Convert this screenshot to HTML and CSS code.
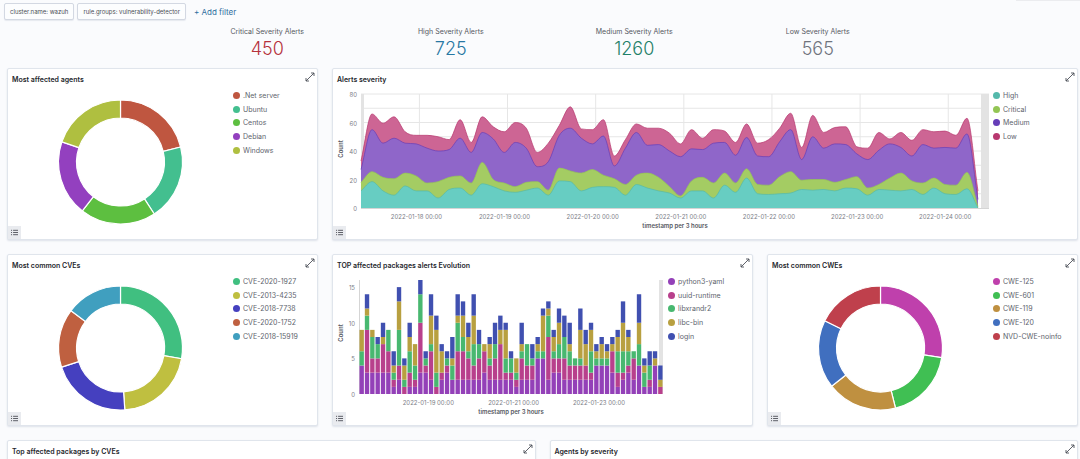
FILE: index.html
```html
<!DOCTYPE html>
<html lang="en">
<head>
  <meta charset="UTF-8" />
  <meta name="viewport" content="width=device-width, initial-scale=1.0"/>
  <title>Vulnerabilities</title>
  <link rel="stylesheet" href="styles.css">
</head>
<body>
  <svg class="sprite" aria-hidden="true">
    <symbol id="icon-expand" viewBox="0 0 10 10">
      <path d="M1.2 8.8L8.8 1.2M6 1h3v3M1 6v3h3" fill="none" stroke="currentColor" stroke-width="0.8"/>
    </symbol>
    <symbol id="icon-list" viewBox="0 0 8 8">
      <path d="M0 1.5h1.2M0 4h1.2M0 6.5h1.2M2.4 1.5h5.6M2.4 4h5.6M2.4 6.5h5.6" fill="none" stroke="currentColor" stroke-width="1"/>
    </symbol>
  </svg>

  <div class="filter-bar">
    <button class="filter-pill">cluster.name: wazuh</button>
    <button class="filter-pill">rule.groups: vulnerability-detector</button>
    <button class="add-filter">+ Add filter</button>
  </div>

  <main class="dashboard">
    <div class="metrics">
      <div class="metric">
        <div class="metric-label">Critical Severity Alerts</div>
        <div class="metric-value critical">450</div>
      </div>
      <div class="metric">
        <div class="metric-label">High Severity Alerts</div>
        <div class="metric-value high">725</div>
      </div>
      <div class="metric">
        <div class="metric-label">Medium Severity Alerts</div>
        <div class="metric-value medium">1260</div>
      </div>
      <div class="metric">
        <div class="metric-label">Low Severity Alerts</div>
        <div class="metric-value low">565</div>
      </div>
    </div>

    <div class="row row-top">
      <section class="panel">
        <header class="panel-header">
          <h2>Most affected agents</h2>
          <button class="icon-btn" aria-label="Expand"><svg><use href="#icon-expand"/></svg></button>
        </header>
        <div class="panel-body">
          <div class="chart" id="agents"></div>
          <ul class="legend"></ul>
        </div>
        <button class="legend-btn" aria-label="Toggle legend"><svg><use href="#icon-list"/></svg></button>
      </section>
      <section class="panel">
        <header class="panel-header">
          <h2>Alerts severity</h2>
          <button class="icon-btn" aria-label="Expand"><svg><use href="#icon-expand"/></svg></button>
        </header>
        <div class="panel-body">
          <div class="chart" id="severity"></div>
          <ul class="legend"></ul>
        </div>
        <button class="legend-btn" aria-label="Toggle legend"><svg><use href="#icon-list"/></svg></button>
      </section>
    </div>

    <div class="row row-middle">
      <section class="panel">
        <header class="panel-header">
          <h2>Most common CVEs</h2>
          <button class="icon-btn" aria-label="Expand"><svg><use href="#icon-expand"/></svg></button>
        </header>
        <div class="panel-body">
          <div class="chart" id="cves"></div>
          <ul class="legend"></ul>
        </div>
        <button class="legend-btn" aria-label="Toggle legend"><svg><use href="#icon-list"/></svg></button>
      </section>
      <section class="panel">
        <header class="panel-header">
          <h2>TOP affected packages alerts Evolution</h2>
          <button class="icon-btn" aria-label="Expand"><svg><use href="#icon-expand"/></svg></button>
        </header>
        <div class="panel-body">
          <div class="chart" id="packages"></div>
          <ul class="legend"></ul>
        </div>
        <button class="legend-btn" aria-label="Toggle legend"><svg><use href="#icon-list"/></svg></button>
      </section>
      <section class="panel">
        <header class="panel-header">
          <h2>Most common CWEs</h2>
          <button class="icon-btn" aria-label="Expand"><svg><use href="#icon-expand"/></svg></button>
        </header>
        <div class="panel-body">
          <div class="chart" id="cwes"></div>
          <ul class="legend"></ul>
        </div>
        <button class="legend-btn" aria-label="Toggle legend"><svg><use href="#icon-list"/></svg></button>
      </section>
    </div>

    <div class="row row-bottom">
      <section class="panel">
        <header class="panel-header">
          <h2>Top affected packages by CVEs</h2>
          <button class="icon-btn" aria-label="Expand"><svg><use href="#icon-expand"/></svg></button>
        </header>
      </section>
      <section class="panel">
        <header class="panel-header">
          <h2>Agents by severity</h2>
          <button class="icon-btn" aria-label="Expand"><svg><use href="#icon-expand"/></svg></button>
        </header>
      </section>
    </div>
  </main>

  <script src="charts.js"></script>
</body>
</html>
```

FILE: styles.css
```css
* {
  box-sizing: border-box;
}

body {
  height: 100vh;
  margin: 0;
  overflow: hidden;
  background: #fafbfd;
  color: #343741;
  font-family: Inter, "Open Sans", sans-serif;
  font-size: 7px;
}

button {
  font-family: inherit;
  cursor: pointer;
}

.sprite {
  display: none;
}

.filter-bar {
  position: relative;
  display: flex;
  gap: 3px;
  padding: 3px 4px 0;
}

.filter-bar::after {
  content: "";
  position: absolute;
  top: 0;
  right: 0;
  width: 64px;
  height: 1px;
  background: #ebecef;
}

.filter-pill {
  height: 17px;
  padding: 0 5px;
  background: #fcfdfe;
  border: 1px solid #d3d8e2;
  border-radius: 2px;
  box-shadow: 0 1px 1px #e6e9ef;
  color: #4a4d55;
  font-size: 6px;
}

.add-filter {
  height: 17px;
  padding: 0 5px;
  background: none;
  border: none;
  color: #2f6f9f;
  font-size: 8px;
}

.dashboard {
  padding: 6px 2px 0 7px;
}

.metrics {
  display: grid;
  grid-template-columns: repeat(4, 1fr);
  max-width: 734px;
  height: 42px;
  margin: 0 auto;
  text-align: center;
}

.metric-label {
  line-height: 11px;
  color: #555861;
}

.metric-value {
  line-height: 24px;
  font-size: 18px;
  font-weight: 300;
}

.critical {
  color: #b5323c;
}

.high {
  color: #2777a3;
}

.medium {
  color: #1f8068;
}

.low {
  color: #70747d;
}

.row {
  display: grid;
  gap: 14px;
  margin-bottom: 14px;
}

.row-top {
  grid-template-columns: 311fr 746fr;
}

.row-middle {
  grid-template-columns: 311fr 421fr 311fr;
}

.row-bottom {
  grid-template-columns: 1fr 1fr;
}

.panel {
  position: relative;
  min-height: 172px;
  background: #fff;
  border: 1px solid #e0e5ec;
  border-radius: 2px;
  box-shadow: 0 1px 2px #dde2e9;
}

.panel-header {
  display: flex;
  justify-content: space-between;
  align-items: center;
  height: 20px;
  padding: 0 2px 0 4px;
}

.panel-header h2 {
  margin: 0;
  font-size: 7px;
  font-weight: 600;
  color: #25272d;
}

.icon-btn {
  width: 10px;
  height: 10px;
  margin-bottom: 4px;
  padding: 0;
  background: none;
  border: none;
  color: #343741;
}

.icon-btn svg {
  display: block;
  width: 10px;
  height: 10px;
}

.panel-body {
  display: flex;
}

.chart {
  flex: 1;
  min-width: 0;
  height: 150px;
}

.chart svg {
  display: block;
}

.legend {
  display: grid;
  grid-template-rows: repeat(5, 1fr);
  width: 84px;
  height: 68px;
  margin: 0;
  padding: 0;
  list-style: none;
  color: #60646d;
}

.legend li {
  display: flex;
  align-items: center;
  gap: 3px;
}

.legend .dot {
  width: 7px;
  height: 7px;
  border-radius: 50%;
}

.legend-btn {
  position: absolute;
  left: 0;
  bottom: 0;
  width: 13px;
  height: 13px;
  padding: 0;
  background: #e9ebef;
  border: none;
  color: #4a4d55;
}

.legend-btn svg {
  display: block;
  width: 7px;
  height: 7px;
  margin: 0 auto;
}

.tick {
  font-size: 6px;
  fill: #7b7e86;
}

.axis-title {
  font-size: 6px;
  font-weight: 600;
  fill: #555861;
}

.grid-line {
  stroke: #e6e6e6;
}

.axis-line {
  stroke: #d5d5d5;
}

.partial {
  fill: #e3e3e3;
}
```

FILE: charts.js
```js
const SVG_NS = 'http://www.w3.org/2000/svg';

function el(parent, name, attrs, text) {
  const node = document.createElementNS(SVG_NS, name);
  for (const key in attrs) node.setAttribute(key, attrs[key]);
  if (text !== undefined) node.textContent = text;
  parent.appendChild(node);
  return node;
}

function createSvg(box) {
  box.innerHTML = '';
  return el(box, 'svg', { width: box.clientWidth, height: box.clientHeight });
}

function drawLegend(box, names, colors) {
  box.nextElementSibling.innerHTML = names.map((name, i) =>
    `<li><span class="dot" style="background:${colors[i]}"></span>${name}</li>`
  ).join('');
}

// Donuts
const donuts = {
  agents: {
    names: ['.Net server', 'Ubuntu', 'Centos', 'Debian', 'Windows'],
    values: [76, 71, 71, 71, 71],
    colors: ['#bf5640', '#43bf8f', '#5dbf40', '#9340bf', '#afbf40']
  },
  cves: {
    names: ['CVE-2020-1927', 'CVE-2013-4235', 'CVE-2018-7738', 'CVE-2020-1752', 'CVE-2018-15919'],
    values: [100, 76, 76, 55, 53],
    colors: ['#40bf80', '#bfbf40', '#4540bf', '#bf6040', '#409fbf']
  },
  cwes: {
    names: ['CWE-125', 'CWE-601', 'CWE-119', 'CWE-120', 'NVD-CWE-noinfo'],
    values: [99, 67, 66, 64, 64],
    colors: ['#bf40ac', '#40bf53', '#bf9040', '#406fbf', '#bf404c']
  }
};

function drawDonut(id) {
  const box = document.getElementById(id);
  const { names, values, colors } = donuts[id];
  const svg = createSvg(box);
  const cx = box.clientWidth / 2;
  const cy = 73;
  const outer = 62;
  const inner = 44;
  const total = values.reduce((a, b) => a + b, 0);
  const point = (r, a) => `${cx + r * Math.sin(a)} ${cy - r * Math.cos(a)}`;
  let start = 0;
  values.forEach((value, i) => {
    const end = start + value / total * Math.PI * 2;
    el(svg, 'path', {
      d: `M${point(outer, start)}A${outer} ${outer} 0 0 1 ${point(outer, end)}` +
         `L${point(inner, end)}A${inner} ${inner} 0 0 0 ${point(inner, start)}Z`,
      fill: colors[i],
      stroke: '#fff',
      'stroke-width': 1.2
    });
    start = end;
  });
  drawLegend(box, names, colors);
}

// Alerts severity, upper edge of every stacked layer
const severity = {
  names: ['High', 'Critical', 'Medium', 'Low'],
  colors: ['#54b9ab', '#93c554', '#663db8', '#b8386f'],
  fills: ['#67cdc2', '#a4cc63', '#8f66c9', '#cd6594'],
  tops: [
    [12, 18.5, 12, 9, 15.5, 12, 12, 7, 13, 14, 9, 17, 15, 12, 11, 12.5, 14, 9, 19, 18.5, 12, 14.5, 15, 14.5, 9, 16.5, 14, 12, 10.5, 7, 12, 12, 7, 16, 11, 21, 10, 9.5, 10, 10.5, 13, 12.5, 13, 12, 14, 13.5, 9, 13, 12.5, 12, 13, 9.5, 14, 10, 9.5, 13.5, 0],
    [18, 25.5, 21.5, 20.5, 24.5, 22.5, 17.5, 18.5, 21.5, 22.5, 17.5, 32, 20, 17.5, 15, 18, 18.5, 12.5, 28, 26, 24.5, 27, 23, 20.5, 16.5, 23, 24.5, 21.5, 15, 8.5, 19, 21.5, 17.5, 24.5, 17.5, 27.5, 16.5, 16, 22, 25.5, 19.5, 20, 20, 18, 20, 22, 14, 16.5, 21, 24.5, 19, 17.5, 21, 16.5, 16, 25, 1],
    [27, 55, 45.5, 49, 45.5, 45, 42, 40, 41, 49, 39, 53, 48.5, 39, 46, 42, 29, 32.5, 51, 56, 49, 45, 50.5, 29.5, 42, 53, 44, 44.5, 40, 36, 41.5, 41, 45.5, 46, 37, 49.5, 36.5, 36, 46.5, 55, 34, 50, 42, 45, 44.5, 38, 34, 40.5, 45, 42.5, 36.5, 44.5, 42, 42.5, 42, 52, 6],
    [33, 66, 59.5, 64, 53.5, 51, 51, 50, 48, 62, 46, 64, 57, 53.5, 60, 56, 39, 45.5, 58, 71, 55.5, 55, 62, 36.5, 48, 59, 56, 56, 52.5, 45, 55, 49, 55, 54, 46, 59, 45.5, 48, 56, 66.5, 42.5, 65, 53, 56.5, 57, 43, 42, 53, 48.5, 53, 47.5, 55, 53.5, 54, 51, 63, 12]
  ]
};

// Monotone cubic curve, so that peaks are never overshot
function curve(points) {
  const slopes = points.map((p, i) => {
    if (i === 0 || i === points.length - 1) return 0;
    const a = (p[1] - points[i - 1][1]) / (p[0] - points[i - 1][0]);
    const b = (points[i + 1][1] - p[1]) / (points[i + 1][0] - p[0]);
    if (a * b <= 0) return 0;
    return Math.sign(a) * Math.min(Math.abs(a + b) / 2, 3 * Math.abs(a), 3 * Math.abs(b));
  });
  const last = points.length - 1;
  slopes[0] = (points[1][1] - points[0][1]) / (points[1][0] - points[0][0]);
  slopes[last] = (points[last][1] - points[last - 1][1]) / (points[last][0] - points[last - 1][0]);
  let d = '';
  for (let i = 1; i <= last; i++) {
    const [x0, y0] = points[i - 1];
    const [x1, y1] = points[i];
    const h = (x1 - x0) / 3;
    d += `C${x0 + h} ${y0 + slopes[i - 1] * h} ${x1 - h} ${y1 - slopes[i] * h} ${x1} ${y1}`;
  }
  return d;
}

function drawAxisTitles(svg, left, right, base, middle) {
  el(svg, 'text', { class: 'axis-title', x: (left + right) / 2, y: base + 20, 'text-anchor': 'middle' }, 'timestamp per 3 hours');
  el(svg, 'text', { class: 'axis-title', 'text-anchor': 'middle', transform: `translate(10 ${middle}) rotate(-90)` }, 'Count');
}

function drawSeverity() {
  const box = document.getElementById('severity');
  const svg = createSvg(box);
  const left = 28;
  const right = box.clientWidth - 4;
  const base = 119;
  const step = (right - left) / 57;
  const x = i => left + i * step;
  const y = v => base - v * 114 / 80;

  for (let v = 10; v <= 80; v += 10) {
    el(svg, 'line', { class: 'grid-line', x1: left, x2: right, y1: y(v), y2: y(v) });
  }
  for (let day = 0; day < 7; day++) {
    const gx = x(5.3 + day * 8);
    el(svg, 'line', { class: 'grid-line', x1: gx, x2: gx, y1: y(80), y2: base });
    el(svg, 'text', { class: 'tick', x: gx - 3, y: base + 11, 'text-anchor': 'middle' }, `2022-01-${18 + day} 00:00`);
  }
  for (let v = 0; v <= 80; v += 20) {
    el(svg, 'text', { class: 'tick', x: left - 4, y: y(v) + 3, 'text-anchor': 'end' }, v);
  }
  el(svg, 'rect', { class: 'partial', x: left, y: y(80), width: 3, height: 114 });
  el(svg, 'rect', { class: 'partial', x: right - 8, y: y(80), width: 8, height: 114 });

  for (let n = 3; n >= 0; n--) {
    const points = severity.tops[n].map((v, i) => [x(i), y(v)]);
    el(svg, 'path', {
      d: `M${left} ${base}L${points[0][0]} ${points[0][1]}${curve(points)}L${x(56)} ${base}Z`,
      fill: severity.fills[n]
    });
    el(svg, 'path', {
      d: `M${points[0][0]} ${points[0][1]}${curve(points)}`,
      fill: 'none', stroke: severity.colors[n], 'stroke-width': 0.7
    });
  }
  el(svg, 'line', { class: 'axis-line', x1: left, x2: right, y1: base + 0.5, y2: base + 0.5 });
  drawAxisTitles(svg, left, right, base, 60);
  drawLegend(box, severity.names, severity.colors);
}

// Packages, upper edge of every stacked segment
const packages = {
  names: ['python3-yaml', 'uuid-runtime', 'libxrandr2', 'libc-bin', 'login'],
  colors: ['#9340b8', '#b8408c', '#48b870', '#b8a040', '#4050b0'],
  tops: [
    [4, 4, 6, 9, 9], [3, 9, 11, 12, 14], [3, 5, 8, 9, 9], [3, 5, 7, 7, 8], [3, 7, 7, 8, 10],
    [3, 6, 9, 9, 9], [1, 2, 3, 4, 6], [2, 4, 9, 13, 15], [0, 1, 2, 4, 5], [1, 3, 6, 8, 10],
    [1, 2, 4, 7, 7], [3, 10, 14, 14, 16], [3, 4, 5, 5, 6], [2, 6, 7, 11, 14], [0, 1, 3, 9, 11],
    [2, 3, 3, 6, 7], [3, 4, 5, 5, 6], [2, 2, 4, 5, 8], [2, 6, 10, 11, 14], [2, 6, 8, 11, 13],
    [2, 5, 6, 8, 10], [2, 4, 7, 11, 14], [2, 5, 7, 7, 9], [3, 6, 6, 7, 7], [2, 4, 5, 7, 8],
    [2, 5, 7, 7, 10], [2, 7, 7, 9, 11], [2, 3, 5, 9, 10], [2, 3, 5, 5, 6], [1, 2, 3, 5, 5],
    [2, 5, 6, 7, 10], [2, 4, 7, 7, 7], [2, 4, 5, 5, 7], [5, 5, 6, 7, 8], [5, 5, 6, 11, 12],
    [2, 8, 11, 12, 13], [3, 5, 6, 8, 9], [3, 5, 7, 10, 12], [2, 5, 8, 8, 11], [2, 4, 6, 7, 10],
    [2, 4, 5, 5, 5], [2, 4, 5, 9, 12], [2, 4, 4, 7, 9], [2, 3, 6, 9, 10], [4, 4, 5, 6, 7],
    [4, 4, 5, 7, 8], [4, 4, 5, 6, 7], [3, 6, 6, 7, 8], [1, 3, 6, 8, 9], [2, 3, 6, 10, 13],
    [3, 4, 6, 8, 9], [2, 5, 6, 6, 6], [4, 4, 7, 10, 14], [1, 1, 3, 4, 5], [1, 2, 4, 4, 6],
    [4, 4, 4, 5, 6], [0, 1, 1, 2, 4]
  ]
};

function drawPackages() {
  const box = document.getElementById('packages');
  const svg = createSvg(box);
  const left = 26;
  const right = box.clientWidth - 5;
  const base = 119;
  const step = (right - left) / 57;
  const y = v => base - v * 114 / 16;

  el(svg, 'line', { class: 'axis-line', x1: left + 0.5, x2: left + 0.5, y1: y(16), y2: base });
  el(svg, 'rect', { class: 'partial', x: right - 4, y: y(16), width: 4, height: 114 });
  for (let v = 0; v <= 15; v += 5) {
    el(svg, 'text', { class: 'tick', x: left - 4, y: y(v) + 3, 'text-anchor': 'end' }, v);
  }
  packages.tops.forEach((stack, i) => {
    let from = 0;
    stack.forEach((to, n) => {
      if (to === from) return;
      el(svg, 'rect', {
        x: left + 0.5 + i * step, y: y(to), width: step * 0.82, height: y(from) - y(to),
        fill: packages.colors[n]
      });
      from = to;
    });
  });
  for (let n = 0; n < 3; n++) {
    el(svg, 'text', { class: 'tick', x: left + step * (13 + n * 16), y: base + 11, 'text-anchor': 'middle' }, `2022-01-${19 + n * 2} 00:00`);
  }
  drawAxisTitles(svg, left, right, base, 58);
  drawLegend(box, packages.names, packages.colors);
}

function draw() {
  Object.keys(donuts).forEach(drawDonut);
  drawSeverity();
  drawPackages();
}

draw();
window.addEventListener('resize', draw);
```
